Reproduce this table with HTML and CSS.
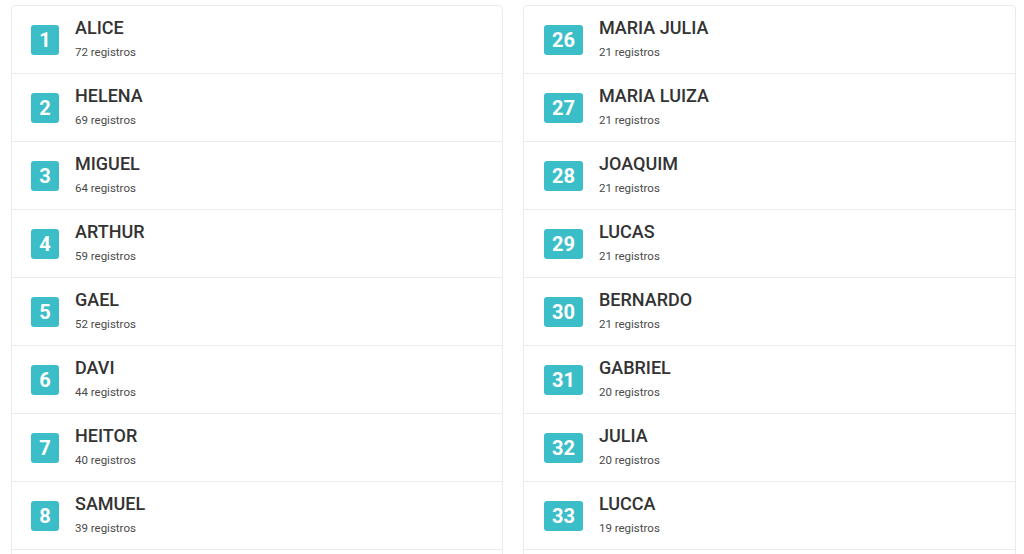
FILE: index.html
```html
<!DOCTYPE html>
<html lang="pt">
<head>
<meta charset="utf-8">
<link rel="stylesheet" href="styles.css">
</head>
<body>
<div class="grid">
  <ul class="card">
    <li class="row"><span class="badge">1</span><div class="info"><div class="name">ALICE</div><div class="count">72 registros</div></div></li>
    <li class="row"><span class="badge">2</span><div class="info"><div class="name">HELENA</div><div class="count">69 registros</div></div></li>
    <li class="row"><span class="badge">3</span><div class="info"><div class="name">MIGUEL</div><div class="count">64 registros</div></div></li>
    <li class="row"><span class="badge">4</span><div class="info"><div class="name">ARTHUR</div><div class="count">59 registros</div></div></li>
    <li class="row"><span class="badge">5</span><div class="info"><div class="name">GAEL</div><div class="count">52 registros</div></div></li>
    <li class="row"><span class="badge">6</span><div class="info"><div class="name">DAVI</div><div class="count">44 registros</div></div></li>
    <li class="row"><span class="badge">7</span><div class="info"><div class="name">HEITOR</div><div class="count">40 registros</div></div></li>
    <li class="row"><span class="badge">8</span><div class="info"><div class="name">SAMUEL</div><div class="count">39 registros</div></div></li>
    <li class="row"></li>
  </ul>
  <ul class="card card-right">
    <li class="row"><span class="badge">26</span><div class="info"><div class="name">MARIA JULIA</div><div class="count">21 registros</div></div></li>
    <li class="row"><span class="badge">27</span><div class="info"><div class="name">MARIA LUIZA</div><div class="count">21 registros</div></div></li>
    <li class="row"><span class="badge">28</span><div class="info"><div class="name">JOAQUIM</div><div class="count">21 registros</div></div></li>
    <li class="row"><span class="badge">29</span><div class="info"><div class="name">LUCAS</div><div class="count">21 registros</div></div></li>
    <li class="row"><span class="badge">30</span><div class="info"><div class="name">BERNARDO</div><div class="count">21 registros</div></div></li>
    <li class="row"><span class="badge">31</span><div class="info"><div class="name">GABRIEL</div><div class="count">20 registros</div></div></li>
    <li class="row"><span class="badge">32</span><div class="info"><div class="name">JULIA</div><div class="count">20 registros</div></div></li>
    <li class="row"><span class="badge">33</span><div class="info"><div class="name">LUCCA</div><div class="count">19 registros</div></div></li>
    <li class="row"></li>
  </ul>
</div>
</body>
</html>
```
FILE: styles.css
```css
html, body {
  margin: 0;
  padding: 0;
  background: #ffffff;
  font-family: Roboto, "Liberation Sans", sans-serif;
}
.grid {
  display: grid;
  grid-template-columns: 492px 493px;
  column-gap: 20px;
  padding: 5px 0 0 11px;
}
.card {
  list-style: none;
  margin: 0;
  padding: 0;
  border: 1px solid #ebebeb;
  border-radius: 4px;
  background: #fff;
}
.row {
  display: flex;
  align-items: center;
  height: 67px;
  padding-left: 19px;
  border-bottom: 1px solid #ebebeb;
  box-sizing: content-box;
}
.card-right .row {
  padding-left: 20px;
}
.badge {
  display: inline-flex;
  align-items: center;
  justify-content: center;
  min-width: 28px;
  height: 30px;
  padding: 0 8px;
  box-sizing: border-box;
  background: #3bbec8;
  color: #fff;
  font-weight: 700;
  font-size: 20px;
  border-radius: 3px;
  margin-right: 16px;
}
.info {
  display: flex;
  flex-direction: column;
  margin-top: -2px;
}
.name {
  font-size: 18px;
  font-weight: 500;
  color: #333;
  line-height: 22px;
}
.count {
  font-size: 11.5px;
  color: #4a4a4a;
  margin-top: 6px;
  line-height: 15px;
}
```
